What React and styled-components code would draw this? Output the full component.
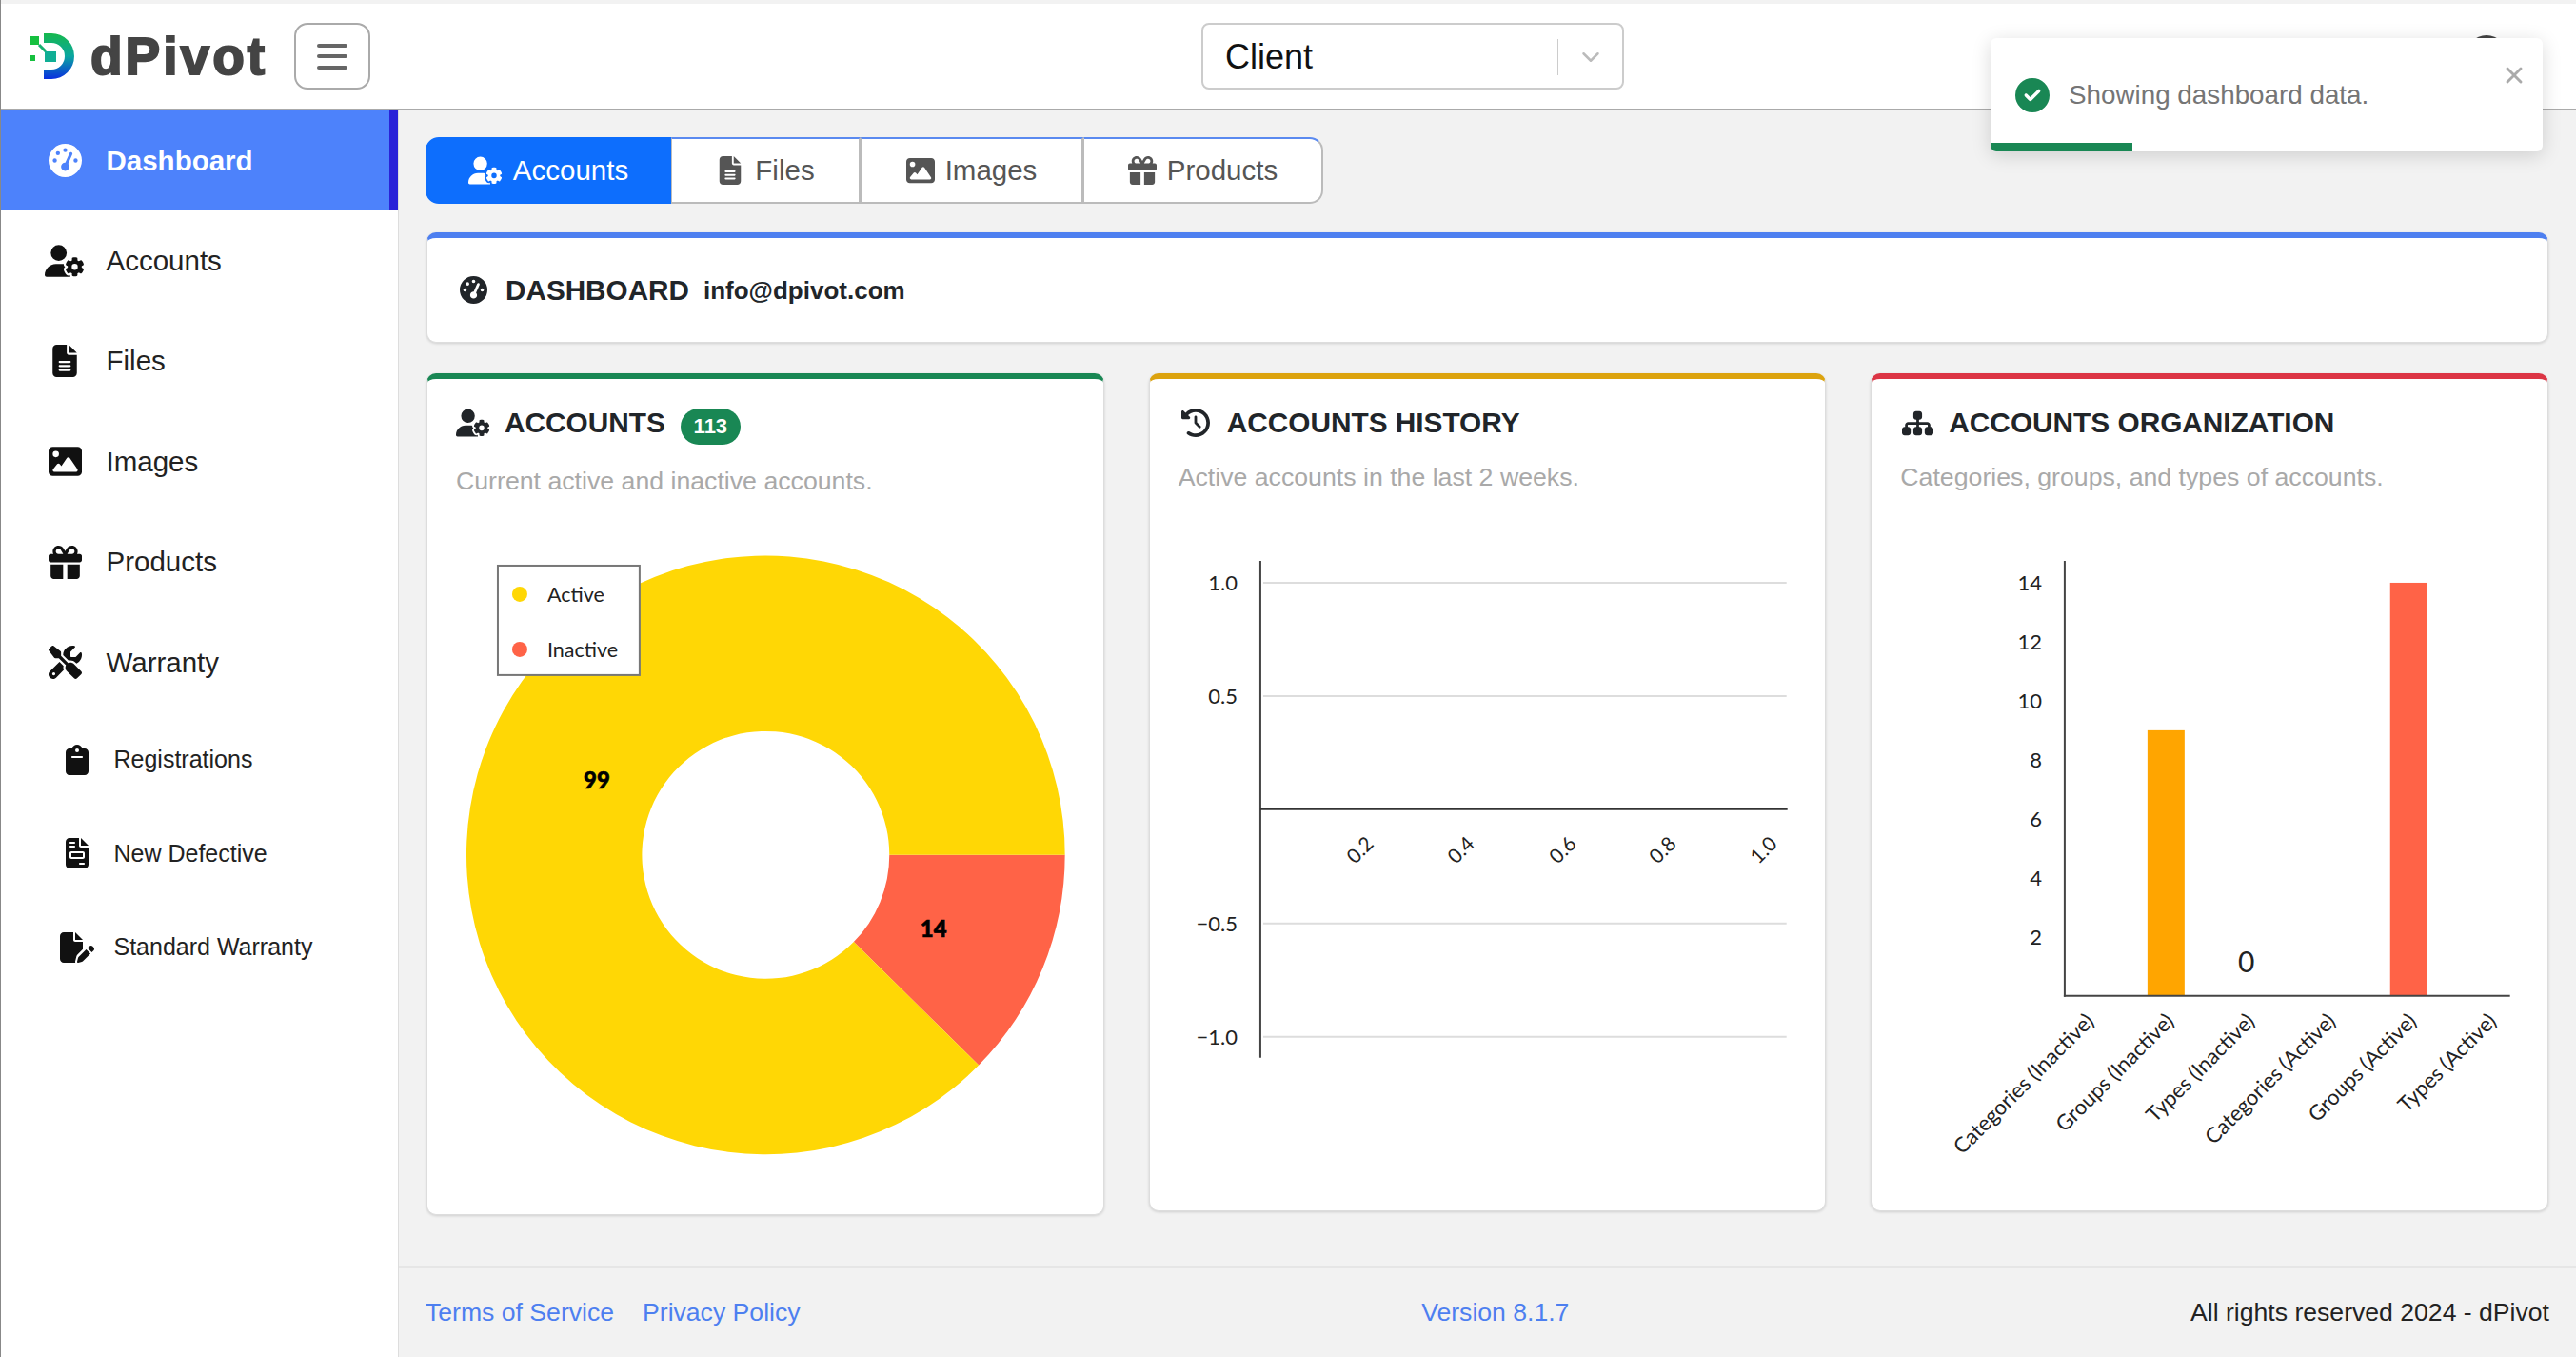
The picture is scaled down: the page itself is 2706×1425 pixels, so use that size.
import React from 'react';
import styled, { createGlobalStyle } from 'styled-components';
import {
  FaGaugeHigh, FaUserGear, FaFileLines, FaImage, FaGift, FaScrewdriverWrench, FaClipboard,
  FaFileInvoice, FaFilePen, FaClockRotateLeft, FaSitemap, FaCircleCheck, FaCircleUser,
} from 'react-icons/fa6';
import { ChevronDown, X } from 'lucide-react';

const GlobalStyle = createGlobalStyle`
  html, body { margin: 0; padding: 0; background: #fff; }
  body { font-family: "Liberation Sans", Arial, sans-serif; color: #212529; }
  * { box-sizing: border-box; }
`;

const Page = styled.div`
  position: relative;
  width: 2706px;
  height: 1425px;
  overflow: hidden;
  border-left: 1px solid #888;
  display: flex;
  flex-direction: column;
`;

const Header = styled.header`
  height: 116px;
  flex: none;
  display: flex;
  align-items: center;
  background: #fff;
  border-top: 4px solid #f2f2f2;
  border-bottom: 2px solid #aaa;
`;

const Brand = styled.div`
  display: flex;
  align-items: center;
  gap: 15px;
  margin-left: 29px;
  width: 279px;
`;

const BrandName = styled.span`
  font-size: 55px;
  font-weight: 700;
  letter-spacing: 3px;
  line-height: 1;
  color: #444;
  -webkit-text-stroke: 2px #444;
`;

const MenuButton = styled.button`
  width: 80px;
  height: 70px;
  padding: 0;
  background: #fff;
  border: 2px solid #aaa;
  border-radius: 14px;
  display: flex;
  flex-direction: column;
  align-items: center;
  justify-content: center;
  gap: 7.5px;
  span {
    width: 32px;
    height: 4px;
    border-radius: 2px;
    background: #666;
  }
`;

const ClientSelect = styled.div`
  margin-left: 873px;
  width: 444px;
  height: 70px;
  display: flex;
  align-items: center;
  background: #fff;
  border: 2px solid #ccc;
  border-radius: 8px;
  padding: 2px 0 0 23px;
  font-size: 36px;
  color: #111;
`;

const SelectValue = styled.span`
  flex: 1;
`;

const SelectCaret = styled.span`
  width: 68px;
  height: 38px;
  display: flex;
  align-items: center;
  justify-content: center;
  border-left: 1px solid #ccc;
  color: #bbb;
`;

const Avatar = styled.div`
  margin-left: auto;
  margin-right: 72px;
  display: flex;
  color: #444;
`;

const Body = styled.div`
  flex: 1;
  display: flex;
  min-height: 0;
`;

const Sidebar = styled.nav`
  width: 418px;
  flex: none;
  background: #fff;
  border-right: 1px solid #ddd;
`;

const NavItem = styled.a`
  height: 105.4px;
  display: flex;
  align-items: center;
  gap: 21.5px;
  padding-left: 45px;
  font-size: 29.5px;
  color: ${(p) => (p.$active ? '#fff' : '#222')};
  font-weight: ${(p) => (p.$active ? 700 : 400)};
  background: ${(p) => (p.$active ? '#4d82fb' : 'transparent')};
  border-right: 9px solid ${(p) => (p.$active ? '#2a22d8' : 'transparent')};
`;

const SubItem = styled.a`
  height: 98.5px;
  display: flex;
  align-items: center;
  gap: 18.5px;
  padding-left: 60px;
  font-size: 25px;
  color: #222;
`;

const NavIcon = styled.span`
  width: ${(p) => p.$box}px;
  flex: none;
  display: flex;
  justify-content: center;
  color: ${(p) => (p.$light ? '#fff' : '#111')};
`;

const Main = styled.main`
  flex: 1;
  min-width: 0;
  display: flex;
  flex-direction: column;
  background: #f2f2f2;
`;

const Content = styled.div`
  flex: 1;
  padding: 28px 29px 0 29px;
`;

const Tabs = styled.div`
  display: inline-flex;
  height: 70px;
  margin: 0 0 30px -1px;
  border-radius: 14px;
  background: #fff;
  vertical-align: top;
`;

const Tab = styled.button`
  width: ${(p) => p.$width}px;
  display: flex;
  align-items: center;
  justify-content: center;
  gap: 11px;
  padding: 0;
  font: 29.5px "Liberation Sans", Arial, sans-serif;
  color: ${(p) => (p.$active ? '#fff' : '#555')};
  background: ${(p) => (p.$active ? '#0d6efd' : 'transparent')};
  border: 2px solid #bbb;
  border-top-color: #5b8af0;
  border-left-width: ${(p) => (p.$active ? 2 : 0)}px;
  border-color: ${(p) => (p.$active ? '#0d6efd' : '')};
  &:first-child { border-radius: 14px 0 0 14px; }
  &:last-child { border-radius: 0 14px 14px 0; }
  & + & { border-left: 1px solid #bbb; }
`;

const Banner = styled.section`
  height: 116px;
  margin-bottom: 32px;
  display: flex;
  align-items: center;
  gap: 19px;
  padding-left: 34px;
  background: #fff;
  border: 1px solid #ddd;
  border-top: 6px solid #4d7ff0;
  border-radius: 10px;
  box-shadow: 0 1px 3px rgba(0, 0, 0, 0.15);
`;

const BannerTitle = styled.h1`
  margin: 0;
  font-size: 29.7px;
  font-weight: 700;
  color: #212529;
`;

const BannerMail = styled.span`
  font-size: 26px;
  font-weight: 700;
  margin-left: -4px;
  padding-top: 2px;
  color: #212529;
`;

const CardGrid = styled.div`
  display: grid;
  grid-template-columns: repeat(3, 1fr);
  gap: 47px;
  align-items: start;
`;

const Card = styled.section`
  background: #fff;
  border: 1px solid #ddd;
  border-top: 6px solid ${(p) => p.$accent};
  border-radius: 10px;
  box-shadow: 0 1px 3px rgba(0, 0, 0, 0.15);
`;

const CardHead = styled.div`
  padding: 29px 30px 0;
`;

const CardTitle = styled.div`
  display: flex;
  align-items: flex-start;
  min-height: 34px;
  gap: 15px;
`;

const TitleIcon = styled.span`
  width: 36px;
  height: 34px;
  flex: none;
  display: flex;
  align-items: center;
  justify-content: center;
  color: #212529;
`;

const TitleText = styled.h2`
  margin: 0;
  font-size: 29.8px;
  line-height: 34px;
  font-weight: 700;
  color: #212529;
`;

const CountBadge = styled.span`
  width: 63px;
  height: 38px;
  margin: 2px 0 -2px 1px;
  display: flex;
  align-items: center;
  justify-content: center;
  border-radius: 19px;
  background: #198754;
  color: #fff;
  font-size: 22px;
  font-weight: 700;
`;

const CardSub = styled.p`
  margin: 20px 0 0;
  font-size: 26.7px;
  line-height: 40px;
  color: #a9a9a9;
`;

const ChartBox = styled.svg`
  display: block;
  width: 100%;
  height: 750px;
  font-family: Lato, "Liberation Sans", sans-serif;
  text { fill: #222; }
`;

const PieLabel = styled.text`
  font-size: 24px;
  font-weight: 900;
  text-anchor: middle;
  stroke: #000;
  stroke-width: 0.6px;
  && { fill: #000; }
`;

const Footer = styled.footer`
  height: 96px;
  flex: none;
  display: flex;
  align-items: center;
  justify-content: space-between;
  padding: 0 28px;
  border-top: 3px solid #e6e6e6;
  font-size: 26.6px;
  color: #222;
`;

const FooterLinks = styled.div`
  display: flex;
  gap: 30px;
`;

const FooterLink = styled.a`
  color: #4d7ff0;
`;

const Toast = styled.div`
  position: absolute;
  left: 2090px;
  top: 40px;
  width: 580px;
  height: 119px;
  background: #fff;
  border-radius: 6px;
  overflow: hidden;
  box-shadow: 0 4px 20px rgba(0, 0, 0, 0.15);
  display: flex;
  align-items: flex-start;
  gap: 20px;
  padding: 42px 0 0 26px;
  font-size: 27.8px;
  color: #757575;
`;

const ToastIcon = styled.span`
  display: flex;
  color: #198754;
`;

const ToastText = styled.span`
  line-height: 36px;
`;

const ToastClose = styled.span`
  position: absolute;
  right: 16px;
  top: 25px;
  display: flex;
  color: #aaa;
`;

const ToastProgress = styled.div`
  position: absolute;
  left: 0;
  bottom: 0;
  height: 9px;
  background: #198754;
`;

const mainNav = [
  { label: 'Dashboard', Icon: FaGaugeHigh, size: 35, active: true },
  { label: 'Accounts', Icon: FaUserGear, size: 42 },
  { label: 'Files', Icon: FaFileLines, size: 34 },
  { label: 'Images', Icon: FaImage, size: 35 },
  { label: 'Products', Icon: FaGift, size: 35 },
  { label: 'Warranty', Icon: FaScrewdriverWrench, size: 35 },
];

const subNav = [
  { label: 'Registrations', Icon: FaClipboard, size: 32 },
  { label: 'New Defective', Icon: FaFileInvoice, size: 32 },
  { label: 'Standard Warranty', Icon: FaFilePen, size: 36 },
];

const tabs = [
  { label: 'Accounts', Icon: FaUserGear, size: 36, width: 258, active: true },
  { label: 'Files', Icon: FaFileLines, size: 30, width: 199 },
  { label: 'Images', Icon: FaImage, size: 30, width: 234 },
  { label: 'Products', Icon: FaGift, size: 30, width: 252 },
];

const Logo = () => (
  <svg width="50" height="50" viewBox="30 31 50 50">
    <defs>
      <linearGradient id="logoD" x1="0" y1="0" x2="0" y2="1">
        <stop offset="0" stopColor="#16b84c" />
        <stop offset="0.5" stopColor="#0aa6a0" />
        <stop offset="1" stopColor="#0a2fe0" />
      </linearGradient>
    </defs>
    <rect x="32" y="35" width="9" height="9" fill="#16c03f" />
    <rect x="31" y="55" width="6" height="6" fill="#16c03f" />
    <path d="M41 44 L48 51" stroke="#16b070" strokeWidth="3" />
    <rect x="47" y="51" width="12" height="11" fill="#10ae95" />
    <path d="M46 32 H54 A24 24 0 0 1 54 80 H46 V70 H54 A14 14 0 0 0 54 42 H46 Z" fill="url(#logoD)" />
  </svg>
);

const polar = (cx, cy, r, deg) => {
  const a = (deg * Math.PI) / 180;
  return [cx + r * Math.cos(a), cy + r * Math.sin(a)];
};

const ringSlice = (cx, cy, outer, inner, from, to) => {
  const [x1, y1] = polar(cx, cy, outer, from);
  const [x2, y2] = polar(cx, cy, outer, to);
  const [x3, y3] = polar(cx, cy, inner, to);
  const [x4, y4] = polar(cx, cy, inner, from);
  const large = to - from > 180 ? 1 : 0;
  return `M${x1} ${y1} A${outer} ${outer} 0 ${large} 1 ${x2} ${y2} L${x3} ${y3} A${inner} ${inner} 0 ${large} 0 ${x4} ${y4} Z`;
};

const AccountsChart = () => {
  const split = (14 / 113) * 360;
  return (
    <ChartBox viewBox="449 525 710 750" preserveAspectRatio="xMinYMin meet">
      <path d={ringSlice(804.5, 898, 314.5, 130, 0, split)} fill="#ff6347" />
      <path d={ringSlice(804.5, 898, 314.5, 130, split, 360)} fill="#ffd705" />
      <PieLabel x="627" y="828">99</PieLabel>
      <PieLabel x="981" y="984">14</PieLabel>
      <rect x="523" y="594" width="149" height="115" fill="#fff" stroke="#777" strokeWidth="2" />
      <circle cx="546" cy="624" r="8" fill="#ffd705" />
      <circle cx="546" cy="682" r="8" fill="#ff6347" />
      <text x="575" y="632" fontSize="21.5">Active</text>
      <text x="575" y="690" fontSize="21.5">Inactive</text>
    </ChartBox>
  );
};

const HistoryChart = () => {
  const rows = [[612, '1.0'], [731, '0.5'], [970, '−0.5'], [1089, '−1.0']];
  const cols = [[1429, '0.2'], [1535, '0.4'], [1642, '0.6'], [1747, '0.8'], [1853, '1.0']];
  return (
    <ChartBox viewBox="1208 521 710 750" preserveAspectRatio="xMinYMin meet">
      {rows.map(([y, label]) => (
        <g key={label}>
          <line x1="1327" x2="1877" y1={y} y2={y} stroke="#ddd" strokeWidth="2" />
          <text x="1300" y={y + 8} fontSize="22" textAnchor="end">{label}</text>
        </g>
      ))}
      <line x1="1324" x2="1324" y1="589" y2="1111" stroke="#444" strokeWidth="2" />
      <line x1="1324" x2="1878" y1="850" y2="850" stroke="#333" strokeWidth="2" />
      {cols.map(([x, label]) => (
        <text key={x} x={x} y="900" fontSize="21" textAnchor="middle" transform={`rotate(-45 ${x} 893)`}>{label}</text>
      ))}
    </ChartBox>
  );
};

const orgBars = [
  ['Categories (Inactive)', 2191, 0],
  ['Groups (Inactive)', 2275, 9, '#ffa500'],
  ['Types (Inactive)', 2360, 0],
  ['Categories (Active)', 2445, 0],
  ['Groups (Active)', 2530, 14, '#ff6347'],
  ['Types (Active)', 2614, 0],
];

const OrganizationChart = () => (
  <ChartBox viewBox="1966 521 710 750" preserveAspectRatio="xMinYMin meet">
    {[14, 12, 10, 8, 6, 4, 2].map((v) => (
      <text key={v} x="2145" y={1046 - v * 31 + 8} fontSize="22" textAnchor="end">{v}</text>
    ))}
    {orgBars.map(([label, x, value, color]) => (
      <g key={label}>
        {value > 0 && <rect x={x - 19} y={1046 - value * 31} width="39" height={value * 31} fill={color} />}
        <text x={x + 10} y="1074" fontSize="22.2" textAnchor="end" transform={`rotate(-45 ${x + 10} 1074)`}>{label}</text>
      </g>
    ))}
    <text x="2360" y="1021" fontSize="30" textAnchor="middle">0</text>
    <line x1="2169" x2="2169" y1="589" y2="1047" stroke="#444" strokeWidth="2" />
    <line x1="2168" x2="2637" y1="1046" y2="1046" stroke="#444" strokeWidth="2" />
  </ChartBox>
);

export default function App() {
  return (
    <Page>
      <GlobalStyle />
      <Header>
        <Brand>
          <Logo />
          <BrandName>dPivot</BrandName>
        </Brand>
        <MenuButton>
          <span />
          <span />
          <span />
        </MenuButton>
        <ClientSelect>
          <SelectValue>Client</SelectValue>
          <SelectCaret>
            <ChevronDown size={30} strokeWidth={2} />
          </SelectCaret>
        </ClientSelect>
        <Avatar>
          <FaCircleUser size={44} />
        </Avatar>
      </Header>
      <Body>
        <Sidebar>
          {mainNav.map(({ label, Icon, size, active }) => (
            <NavItem key={label} $active={active}>
              <NavIcon $box={44} $light={active}><Icon size={size} /></NavIcon>
              {label}
            </NavItem>
          ))}
          {subNav.map(({ label, Icon, size }) => (
            <SubItem key={label}>
              <NavIcon $box={40}><Icon size={size} /></NavIcon>
              {label}
            </SubItem>
          ))}
        </Sidebar>
        <Main>
          <Content>
            <Tabs>
              {tabs.map(({ label, Icon, size, width, active }) => (
                <Tab key={label} $active={active} $width={width}>
                  <Icon size={size} />
                  {label}
                </Tab>
              ))}
            </Tabs>
            <Banner>
              <FaGaugeHigh size={29} />
              <BannerTitle>DASHBOARD</BannerTitle>
              <BannerMail>info@dpivot.com</BannerMail>
            </Banner>
            <CardGrid>
              <Card $accent="#198754">
                <CardHead>
                  <CardTitle>
                    <TitleIcon><FaUserGear size={36} /></TitleIcon>
                    <TitleText>ACCOUNTS</TitleText>
                    <CountBadge>113</CountBadge>
                  </CardTitle>
                  <CardSub>Current active and inactive accounts.</CardSub>
                </CardHead>
                <AccountsChart />
              </Card>
              <Card $accent="#dca30e">
                <CardHead>
                  <CardTitle>
                    <TitleIcon><FaClockRotateLeft size={30} /></TitleIcon>
                    <TitleText>ACCOUNTS HISTORY</TitleText>
                  </CardTitle>
                  <CardSub>Active accounts in the last 2 weeks.</CardSub>
                </CardHead>
                <HistoryChart />
              </Card>
              <Card $accent="#dc3545">
                <CardHead>
                  <CardTitle>
                    <TitleIcon><FaSitemap size={33} /></TitleIcon>
                    <TitleText>ACCOUNTS ORGANIZATION</TitleText>
                  </CardTitle>
                  <CardSub>Categories, groups, and types of accounts.</CardSub>
                </CardHead>
                <OrganizationChart />
              </Card>
            </CardGrid>
          </Content>
          <Footer>
            <FooterLinks>
              <FooterLink>Terms of Service</FooterLink>
              <FooterLink>Privacy Policy</FooterLink>
            </FooterLinks>
            <FooterLink>Version 8.1.7</FooterLink>
            <span>All rights reserved 2024 - dPivot</span>
          </Footer>
        </Main>
      </Body>
      <Toast>
        <ToastIcon><FaCircleCheck size={36} /></ToastIcon>
        <ToastText>Showing dashboard data.</ToastText>
        <ToastClose><X size={28} strokeWidth={2.5} /></ToastClose>
        <ToastProgress style={{ width: `${(149 / 580) * 100}%` }} />
      </Toast>
    </Page>
  );
}
